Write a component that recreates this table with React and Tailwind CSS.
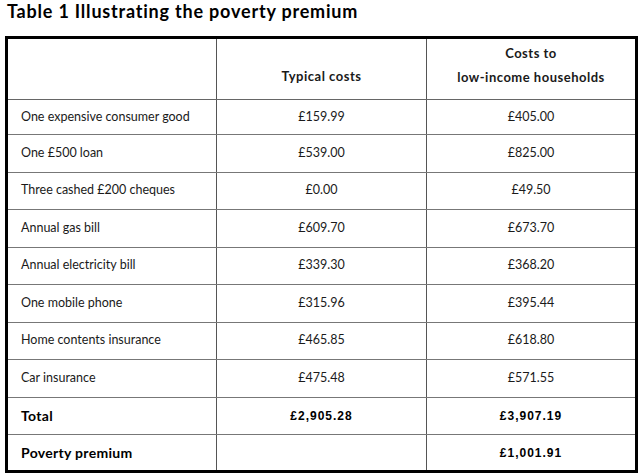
import React from 'react';

const rows = [
  ['One expensive consumer good', '£159.99', '£405.00'],
  ['One £500 loan', '£539.00', '£825.00'],
  ['Three cashed £200 cheques', '£0.00', '£49.50'],
  ['Annual gas bill', '£609.70', '£673.70'],
  ['Annual electricity bill', '£339.30', '£368.20'],
  ['One mobile phone', '£315.96', '£395.44'],
  ['Home contents insurance', '£465.85', '£618.80'],
  ['Car insurance', '£475.48', '£571.55'],
];

const App = () => {
  return (
    <div className="w-[640px] h-[476px] bg-white text-[#1a1a1a] font-['Lato','Open_Sans',sans-serif]">
      {/* title */}
      <div className="h-[36px] pl-[7px] pt-[0px] text-[18px] leading-[22px] font-bold tracking-[0.8px] text-black">
        Table 1 Illustrating the poverty premium
      </div>

      <div className="ml-[5px] w-[633px] border-[3px] border-black">
        {/* header */}
        <div className="grid grid-cols-[209px_210px_1fr] h-[61px] border-b border-[#666]">
          <div className="border-r border-[#555]" />
          <div className="border-r border-[#555] flex items-end justify-center pb-[13px] text-[13px] font-bold tracking-[0.5px] leading-[20px]">
            Typical costs
          </div>
          <div className="flex flex-col items-center justify-end pb-[10px] text-[13px] font-bold tracking-[0.5px] leading-[24px]">
            <span>Costs to</span>
            <span>low-income households</span>
          </div>
        </div>

        {/* body rows */}
        {rows.map((r, i) => (
          <div
            key={r[0]}
            className={`grid grid-cols-[209px_210px_1fr] border-b border-[#777] text-[12.5px] ${i === 0 ? 'h-[35px]' : 'h-[37.5px]'}`}
          >
            <div className="border-r border-[#555] flex items-center pl-[13px]">{r[0]}</div>
            <div className="border-r border-[#555] flex items-center justify-center">{r[1]}</div>
            <div className="flex items-center justify-center">{r[2]}</div>
          </div>
        ))}

        <div className="grid grid-cols-[209px_210px_1fr] h-[37.5px] border-b border-[#777]">
          <div className="border-r border-[#555] flex items-center pl-[13px] text-[14px] font-bold tracking-[0.3px] text-black">Total</div>
          <div className="border-r border-[#555] flex items-center justify-center font-['Liberation_Sans',sans-serif] text-[12px] font-bold tracking-[1px] text-black">£2,905.28</div>
          <div className="flex items-center justify-center font-['Liberation_Sans',sans-serif] text-[12px] font-bold tracking-[1px] text-black">£3,907.19</div>
        </div>

        <div className="grid grid-cols-[209px_210px_1fr] h-[35px]">
          <div className="border-r border-[#555] flex items-center pl-[13px] text-[14px] font-bold tracking-[0.3px] text-black">Poverty premium</div>
          <div className="border-r border-[#555]" />
          <div className="flex items-center justify-center font-['Liberation_Sans',sans-serif] text-[12px] font-bold tracking-[1px] text-black">£1,001.91</div>
        </div>
      </div>
    </div>
  );
};

export default App;
